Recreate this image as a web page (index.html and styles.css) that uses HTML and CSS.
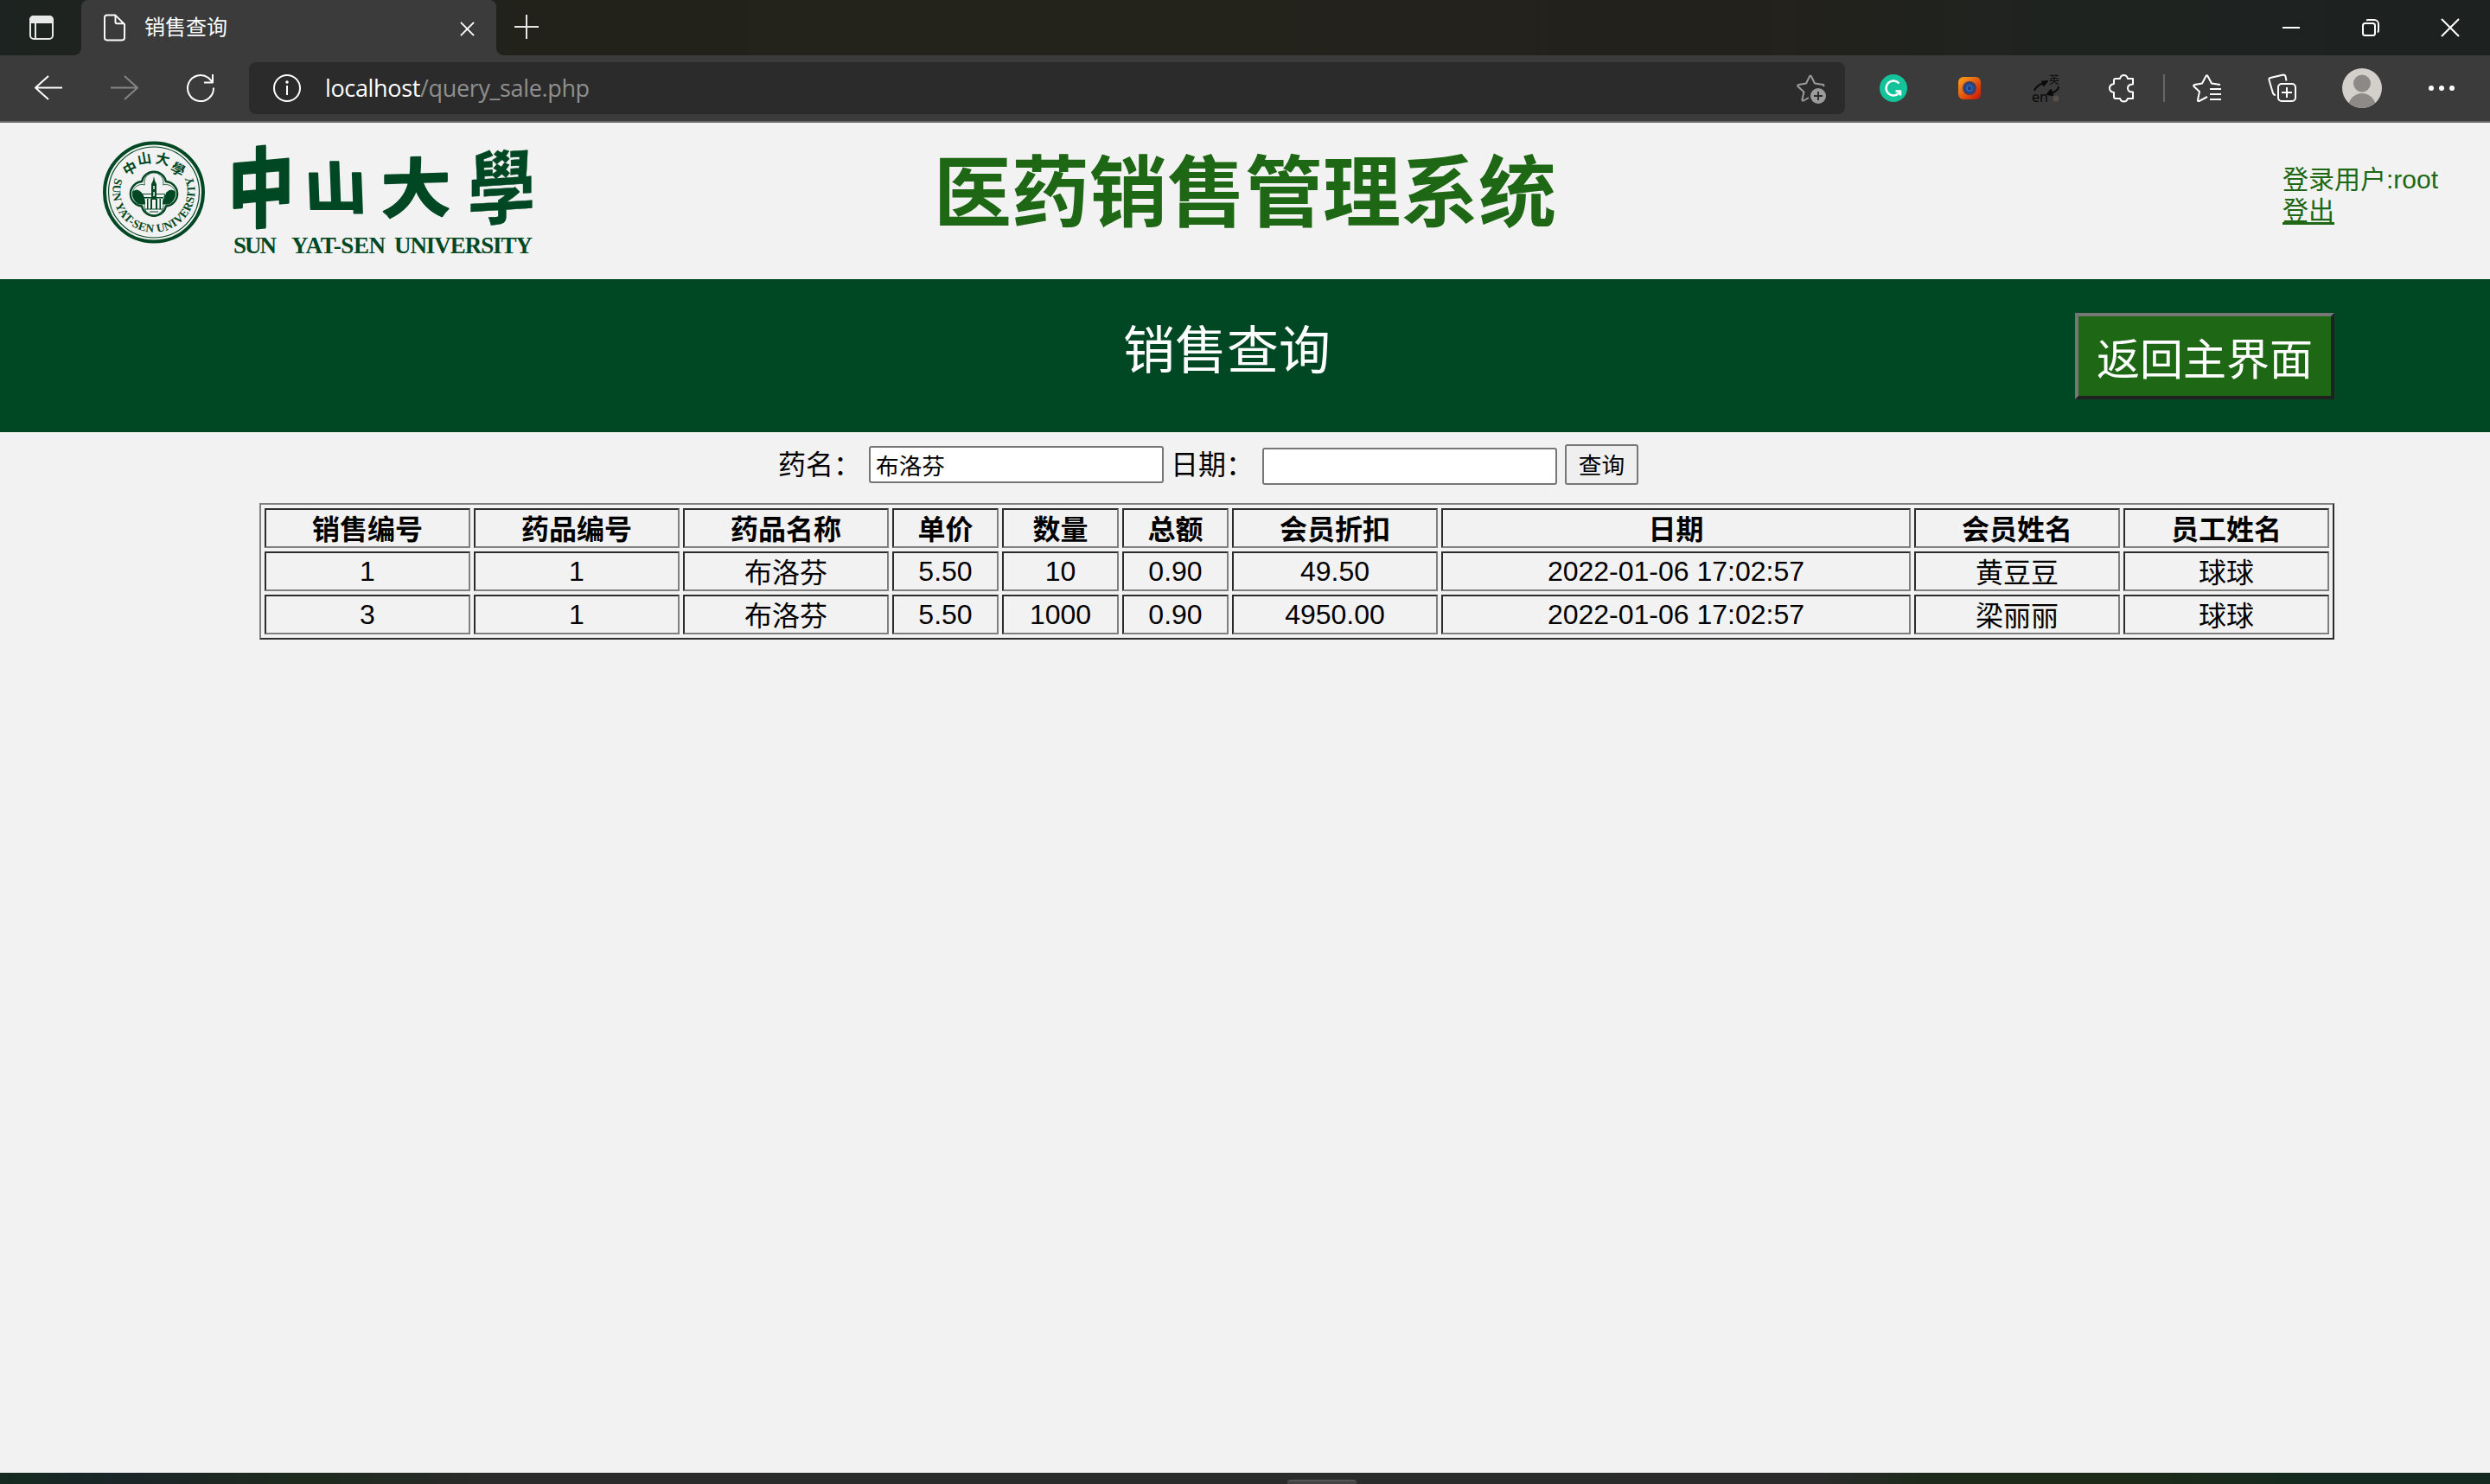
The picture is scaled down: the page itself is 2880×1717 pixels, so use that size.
FILE: index.html
```html
<!DOCTYPE html>
<html lang="zh-CN">
<head>
<meta charset="utf-8">
<title>销售查询</title>
<link rel="stylesheet" href="styles.css">
</head>
<body>
<div class="window">
  <div class="tabstrip">
    <svg class="icon tabs-menu" viewBox="0 0 28 28"><rect x="1" y="1" width="26" height="26" rx="4"/><path class="solid" d="M1 8V5a4 4 0 0 1 4-4h18a4 4 0 0 1 4 4v3z"/><path d="M7 8v19"/></svg>
    <div class="tab">
      <svg class="icon page-icon" viewBox="0 0 26 32"><path d="M4 1h10l11 11v16a3 3 0 0 1-3 3H4a3 3 0 0 1-3-3V4a3 3 0 0 1 3-3zM14 1v8a2 2 0 0 0 2 2h9"/></svg>
      <span class="tab-title">销售查询</span>
      <svg class="icon tab-close" viewBox="0 0 18 18"><path d="M1 1l16 16M17 1L1 17"/></svg>
    </div>
    <svg class="icon plus" viewBox="0 0 28 28"><path d="M14 0v28M0 14h28"/></svg>
    <div class="caption">
      <svg class="icon" viewBox="0 0 20 20"><path d="M0 10h20"/></svg>
      <svg class="icon" viewBox="0 0 20 20"><rect x="1" y="5" width="14" height="14" rx="2.5"/><path d="M5 1.500q1-.5 2-.5h7a5 5 0 0 1 5 5v7q0 1.500-1 2.500"/></svg>
      <svg class="icon" viewBox="0 0 20 20"><path d="M0 0l20 20M20 0L0 20"/></svg>
    </div>
  </div>
  <div class="toolbar">
    <svg class="icon nav" viewBox="0 0 32 32"><path d="M16 2L1 15.500L16 29M1 15.500h31"/></svg>
    <svg class="icon nav dim" viewBox="0 0 32 32"><path d="M16 2l15 13.500L16 29M31 15.500H0"/></svg>
    <svg class="icon nav" viewBox="0 0 32 32"><path d="M31 15.500A15 15 0 1 1 25 4l5 5M30 0v9.500h-10"/></svg>
    <div class="address">
      <svg class="icon info" viewBox="0 0 32 32"><circle cx="16" cy="16" r="15"/><path d="M16 13v11"/><circle class="solid" cx="16" cy="9" r=".8"/></svg>
      <span class="url"><b>localhost</b>/query_sale.php</span>
      <svg class="icon star" viewBox="0 0 34 34"><path d="M14 27l-6 3.500q-2 .5-1.500-1.500L8.500 20.500L1.500 14q-1-1.500 1-2L11 10.500L15 2.500q1-2 2 0L21 10.500L31 12q1 .5 0 2"/><circle class="badge" cx="25" cy="25" r="9"/><path class="badge-plus" d="M25 20v10M20 25h10"/></svg>
    </div>
    <svg class="icon grammar" viewBox="0 0 32 32"><circle class="disc" cx="16" cy="16" r="16"/><path d="M22.500 10.500A8.500 8.500 0 1 0 22.500 21.500L24 19.500h-5.500M24 18.500v6"/></svg>
    <svg class="icon" viewBox="0 0 32 32"><defs><linearGradient id="warm" x2="1" y2="1"><stop stop-color="#ffa51c"/><stop offset="1" stop-color="#c90f04"/></linearGradient></defs><rect x="3" y="3" width="26" height="26" rx="6" fill="url(#warm)" stroke="none"/><circle cx="16" cy="16" r="7" fill="#1d4b94" stroke="#493b60"/><circle cx="16" cy="16" r="3" fill="#173d7d" stroke="#427bd0" stroke-width="1"/></svg>
    <svg class="icon translate" viewBox="0 0 32 32"><text class="cn" x="20" y="11">英</text><text x="0" y="32">en</text><path d="M3 19q2-6 11-9M31 14q0 5-9 8"/><path class="head" d="M12 8.500l6-.5l-4 5zM22 18l-4 5l6 1z"/><circle cx="28" cy="28" r="3.500"/></svg>
    <svg class="icon" viewBox="0 0 32 32"><path d="M9 5h5q1-4 4.500-4t4.500 4h6v6.500q-6 0-6 4.500t6 4.500V28h-6q-1 3.500-4.500 3.500t-4.500-3.500H9q-2 0-2-2v-5q-5-1-5-5t5-5V7q0-2 2-2z"/></svg>
    <i class="divider"></i>
    <svg class="icon" viewBox="0 0 32 32"><path d="M17 26L7.500 31Q5.500 31.500 6 29.500L8 20L1.500 14Q.5 12.500 2.500 12L11 10.500L15.500 2q1-1.500 2 0L22 10.500L32 12M20 17h13M20 23h13M20 29h13"/></svg>
    <svg class="icon" viewBox="0 0 32 32"><rect x="11" y="11" width="20" height="20" rx="4"/><path d="M21 15v12M15 21h12M8 24q-2 0-3-2L.5 6.500Q0 4.500 2 4L17 .5q2 0 2.500 2l1 5"/></svg>
    <svg class="avatar" viewBox="0 0 46 46"><defs><clipPath id="round"><circle cx="23" cy="23" r="23"/></clipPath></defs><g clip-path="url(#round)"><path fill="#d3d0cc" d="M0 0h46v46H0z"/><circle cx="23" cy="17.500" r="10" fill="#8d8986"/><circle cx="23" cy="45" r="16" fill="#8d8986"/></g></svg>
    <svg class="icon dots" viewBox="0 0 32 32"><circle cx="4" cy="16" r="3"/><circle cx="16" cy="16" r="3"/><circle cx="28" cy="16" r="3"/></svg>
  </div>

  <main class="page">
    <header class="masthead">
      <svg class="logo" viewBox="100 142 540 181">
        <defs><path id="ring" d="M133 206A47.500 47.500 0 1 0 223 206"/></defs>
        <circle class="line" cx="178" cy="222.500" r="57" stroke-width="4"/>
        <circle class="line" cx="178" cy="222.500" r="52.500" stroke-width="1.200"/>
        <g class="seal-cn">
          <text transform="translate(153 200) rotate(-28)">中</text>
          <text transform="translate(168 189) rotate(-10)">山</text>
          <text transform="translate(187 190) rotate(12)">大</text>
          <text transform="translate(203 201) rotate(28)">學</text>
        </g>
        <text class="seal-en"><textPath href="#ring" textLength="182">SUN YAT-SEN UNIVERSITY</textPath></text>
        <path class="line" stroke-width="2.400" d="M164 210A14.300 14.300 0 0 1 192 210A14.300 14.300 0 0 1 192 238.500A14.300 14.300 0 0 1 164 238.500A14.300 14.300 0 0 1 164 210z"/>
        <path class="line" stroke-width=".8" d="M167.400 213.900A11 11 0 1 1 188.600 213.900A11 11 0 1 1 188.600 235A11 11 0 1 1 167.400 235A11 11 0 1 1 167.400 213.900z"/>
        <path class="fill" d="M175 213l2-4l1-5l1 5l2 4v18h-6zM153 222q5-5 10 0q5 5 5 14q-7 2-11-2q-4-5-4-12zM203 222q-5-5-10 0q-5 5-5 14q7 2 11-2q4-5 4-12zM170 230h1.500v12h-1.500zM174 230h2v12h-2zM180 230h2v12h-2zM184.500 230h1.500v12h-1.500zM164 224h28v1h-28zM166 228h24v1.500h-24zM168 241.500h20v1h-20zM173 244.500h10v1h-10z"/>
        <path class="pale" d="M177.300 215h1.500v4h-1.500zM177.300 222h1.500v5h-1.500z"/>
        <g class="brush">
          <text transform="translate(264 258) scale(.76 1) skewY(-4)">中</text>
          <text transform="translate(353 241) scale(.72 .64) skewX(2)">山</text>
          <text transform="translate(441 246) scale(.8 .74) skewY(-2)">大</text>
          <text class="fine" transform="translate(541 254) scale(.78 .93) skewY(-3)">學</text>
        </g>
        <g class="latin">
          <text x="270" y="292.500" textLength="50">SUN</text>
          <text x="337" y="292.500" textLength="109">YAT-SEN</text>
          <text x="456" y="292.500" textLength="160">UNIVERSITY</text>
        </g>
      </svg>
      <h1>医药销售管理系统</h1>
      <div class="user"><span>登录用户:root</span><a>登出</a></div>
    </header>
    <div class="band">
      <h2>销售查询</h2>
      <button class="home">返回主界面</button>
    </div>
    <form class="search">
      <label class="name-label">药名：</label>
      <input class="name" type="text" value="布洛芬">
      <label class="date-label">日期：</label>
      <input class="date" type="text">
      <button class="submit" type="button">查询</button>
    </form>
    <table class="sales">
      <colgroup><col class="w-id"><col class="w-id"><col class="w-id"><col class="w-price"><col class="w-count"><col class="w-total"><col class="w-id"><col class="w-date"><col class="w-id"><col class="w-id"></colgroup>
      <tr><th>销售编号</th><th>药品编号</th><th>药品名称</th><th>单价</th><th>数量</th><th>总额</th><th>会员折扣</th><th>日期</th><th>会员姓名</th><th>员工姓名</th></tr>
      <tr><td>1</td><td>1</td><td class="cn">布洛芬</td><td>5.50</td><td>10</td><td>0.90</td><td>49.50</td><td>2022-01-06 17:02:57</td><td class="cn">黄豆豆</td><td class="cn">球球</td></tr>
      <tr><td>3</td><td>1</td><td class="cn">布洛芬</td><td>5.50</td><td>1000</td><td>0.90</td><td>4950.00</td><td>2022-01-06 17:02:57</td><td class="cn">梁丽丽</td><td class="cn">球球</td></tr>
    </table>
  </main>
  <div class="taskbar"><i class="handle"></i></div>
</div>
</body>
</html>
```
FILE: styles.css
```css
* { box-sizing: border-box; }
body { margin: 0; font-family: "Liberation Sans", "Noto Sans CJK SC", sans-serif; color: #000; background: #f2f2f2; }
.window { width: 2880px; height: 1717px; display: flex; flex-direction: column; overflow: hidden; }
svg { display: block; flex: none; }

.icon { width: 32px; height: 32px; fill: none; stroke: #fff; stroke-width: 2; stroke-linejoin: round; overflow: visible; }
.icon .solid { fill: #e8e8e8; }

.tabstrip { height: 64px; flex: none; display: flex; align-items: center; padding-left: 34px; background: linear-gradient(90deg, #1d2320 0, #22221b 22%, #23211b 70%, #1e2320 84%, #1d2221 100%); }
.tabs-menu { width: 28px; height: 28px; stroke: #e8e8e8; }
.tab { position: relative; width: 480px; height: 64px; margin-left: 32px; padding: 0 25px 0 26px; display: flex; align-items: center; background: #3b3b3b; border-radius: 8px 8px 0 0; }
.tab::before, .tab::after { content: ""; position: absolute; bottom: 0; width: 8px; height: 8px; }
.tab::before { left: -8px; background: radial-gradient(circle at 0 0, transparent 7.500px, #3b3b3b 8px); }
.tab::after { right: -8px; background: radial-gradient(circle at 100% 0, transparent 7.500px, #3b3b3b 8px); }
.page-icon { width: 25px; height: 32px; }
.tab-title { margin-left: 22px; color: #fff; font-size: 24px; line-height: 32px; }
.tab-close { width: 17px; height: 17px; margin: 2px 0 0 auto; }
.plus { width: 28px; height: 28px; margin: -2px 0 0 21px; stroke: #e8e8e8; }
.caption { margin-left: auto; padding-right: 36px; display: flex; gap: 72px; }
.caption .icon { width: 20px; height: 20px; }

.toolbar { height: 78px; flex: none; display: flex; align-items: center; padding: 0 40px; background: #3b3b3b; border-bottom: 2px solid #6b6969; }
.nav { margin-right: 56px; }
.nav + .nav + .nav { margin-right: 40px; }
.dim { stroke: #858585; }
.address { width: 1846px; height: 60px; margin-right: 40px; padding: 0 22px 0 28px; display: flex; align-items: center; background: #2b2b2b; border-radius: 8px; }
.url { margin-left: 28px; font: 27px/40px "Open Sans", "Noto Sans", sans-serif; letter-spacing: -.35px; color: #8f8f8f; }
.url b { font-weight: 400; color: #fff; }
.star { width: 34px; height: 34px; margin: 2px 0 0 auto; stroke: #9b9b9b; }
.star .badge { fill: #9b9b9b; stroke: none; }
.star .badge-plus { stroke: #2b2b2b; }
.grammar { stroke-width: 2.6; }
.grammar .disc { fill: #15c39a; stroke: none; }
.toolbar > .icon + .icon:not(.nav) { margin-left: 56px; }
.translate { stroke: #0a0a0a; }
.translate text { font: 16px "Noto Sans", sans-serif; fill: #0a0a0a; stroke: none; }
.translate .cn { font: 12px "Noto Sans CJK SC", sans-serif; }
.translate .head { fill: #0a0a0a; }
.translate circle { fill: #55504a; stroke: none; }
.divider { width: 2px; height: 32px; margin: 0 32px; background: #666; }
.avatar { width: 46px; height: 46px; margin: 0 53px; }
.dots { fill: #fff; stroke: none; }

.page { flex: 1; min-height: 0; background: #f2f2f2; }
.masthead { height: 181px; display: grid; grid-template-columns: 1080px 720px 1fr; color: #1e6815; }
.logo { width: 540px; height: 181px; margin-left: 100px; overflow: visible; font-family: "Liberation Serif", "Noto Sans CJK TC", serif; }
.logo .line { fill: none; stroke: #004723; }
.logo .fill, .logo text { fill: #004723; }
.logo .pale { fill: #f2f2f2; }
.seal-cn { font: 700 16px "Noto Sans CJK TC", sans-serif; text-anchor: middle; }
.seal-en { font-size: 13.5px; font-weight: 700; }
.brush { font: 700 100px "Noto Sans CJK TC", sans-serif; stroke: #004723; stroke-width: 3; stroke-linejoin: round; }
.brush .fine { stroke-width: .5; }
.latin { font-size: 27px; font-weight: 700; }
h1 { margin: 32px 0 0; font-size: 90px; line-height: 100px; font-weight: 700; white-space: nowrap; }
.user { margin: 48px 0 0 840px; display: flex; flex-direction: column; align-items: flex-start; font-size: 30px; line-height: 36px; white-space: nowrap; }
.user a { text-decoration: underline; text-decoration-thickness: 3px; text-underline-offset: 3px; }

.band { height: 177px; display: flex; align-items: flex-start; padding: 39px 180px 0 1299px; color: #fff; background: #004723; }
h2 { margin: 10px 0 0; font-size: 60px; line-height: 70px; font-weight: 400; }
.home { width: 300px; height: 100px; margin-left: auto; padding: 9px 0 0; border: 4px solid; border-color: #767676 #212121 #212121 #767676; background: #1e6815; color: #fff; font: 50px/60px "Liberation Sans", "Noto Sans CJK SC", sans-serif; white-space: nowrap; }

.search { height: 82px; margin: 0; padding: 14px 0 0 900px; display: flex; align-items: flex-start; font-size: 32px; }
label { line-height: 48px; white-space: nowrap; }
.name-label { width: 105px; }
.date-label { width: 106px; }
.search input { width: 341px; height: 43px; padding: 3px 6px; border: 2px solid #767676; border-radius: 3px; background: #fff; font: 26.67px/35px "Liberation Sans", "Noto Sans CJK SC", sans-serif; }
.search .name { margin: 2px 8px 0 0; }
.search .date { margin: 4px 9px 0 0; }
.submit { width: 85px; height: 47px; padding: 2px 0 0; border: 2px solid #767676; border-radius: 3px; background: #efefef; color: #000; font: 26.67px/36px "Liberation Sans", "Noto Sans CJK SC", sans-serif; }

.sales { width: 2400px; margin-left: 300px; table-layout: fixed; border: 2px solid; border-color: #808080 #2c2c2c #2c2c2c #808080; border-spacing: 4px; font-size: 32px; line-height: 38px; text-align: center; }
.sales th, .sales td { height: 46px; padding: 0 0 1px; border: 2px solid; border-color: #2c2c2c #808080 #808080 #2c2c2c; white-space: nowrap; line-height: 38px; }
.sales th, .sales .cn { padding: 4px 0 0; }
.w-id { width: 238px; }
.w-price { width: 123px; }
.w-count { width: 135px; }
.w-total { width: 123px; }
.w-date { width: 543px; }

.taskbar { height: 13px; flex: none; display: flex; justify-content: center; align-items: flex-end; background: linear-gradient(90deg, #142b20 0, #1b2528 5%, #1d2a1d 12%, #2b2b2b 20%, #2a2c2b 50%, #2b2b2b 73%, #1d2a1b 77%, #1d2a17 85%, #142a20 93%, #142a20 100%); }
.handle { width: 80px; height: 5px; margin-left: 178px; border-top: 2px solid #555; background: #424242; border-radius: 4px 4px 0 0; }
```
